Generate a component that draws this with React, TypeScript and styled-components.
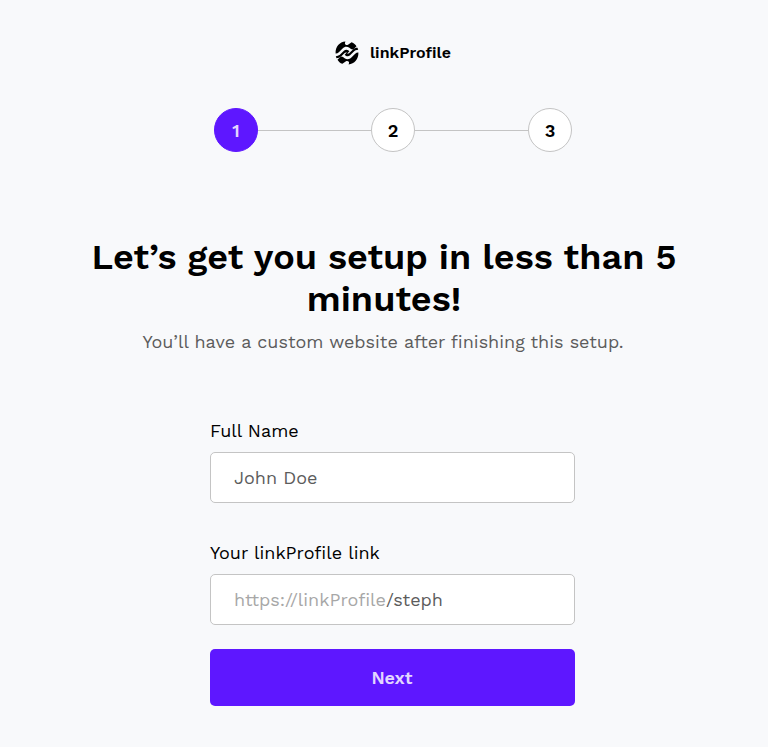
import React from "react";
import styled, { createGlobalStyle } from "styled-components";

const Global = createGlobalStyle`
  * { box-sizing: border-box; }
  body { margin: 0; background: #f8f9fb; font-family: "Work Sans", Inter, "Noto Sans", sans-serif; color: #000; }
`;
const Page = styled.main`
  min-height: 747px;
  display: flex;
  flex-direction: column;
  padding: 40px 0 41px;
`;
const Brand = styled.header`
  display: flex;
  align-items: flex-end;
  justify-content: center;
  gap: 11px;
  height: 25px;
  padding-left: 18px;
`;
const BrandName = styled.span`
  font-size: 16px;
  font-weight: 600;
  line-height: 25px;
`;
const Steps = styled.ol`
  list-style: none;
  display: flex;
  align-items: center;
  width: 358px;
  margin: 43px 0 0 214px;
  padding: 0;
`;
const Step = styled.li<{ $active?: boolean }>`
  flex: none;
  display: flex;
  align-items: center;
  justify-content: center;
  width: 44px;
  height: 44px;
  padding-top: 1px;
  border-radius: 50%;
  border: 1px solid ${(p) => (p.$active ? "#5e17ff" : "#c4c4c4")};
  background: ${(p) => (p.$active ? "#5e17ff" : "#fff")};
  color: ${(p) => (p.$active ? "#e2d6ff" : "#000")};
  font-size: 18px;
  font-weight: 600;
`;
const Connector = styled.li`
  flex: 1;
  height: 1px;
  background: #c4c4c4;
`;
const Title = styled.h1`
  margin: 84px 0 0;
  text-align: center;
  font-size: 36px;
  font-weight: 600;
  line-height: 42px;
`;
const Subtitle = styled.p`
  margin: 10px 2px 0 0;
  text-align: center;
  font-size: 18px;
  line-height: 24px;
  color: #5c5c5c;
`;
const Form = styled.form`
  width: 365px;
  margin: 66px 0 0 210px;
  display: flex;
  flex-direction: column;
`;
const Field = styled.label`
  display: block;
  margin-bottom: 24px;
  & + & { margin-top: 15px; }
`;
const Label = styled.span`
  display: block;
  margin-bottom: 11px;
  font-size: 18px;
  line-height: 21px;
`;
const InputBox = styled.span`
  display: flex;
  align-items: center;
  height: 51px;
  padding: 0 23px;
  border: 1px solid #c4c4c4;
  border-radius: 5px;
  background: #fff;
  font-size: 18px;
  color: #5c5c5c;
`;
const Prefix = styled.span`
  color: #a7a7a7;
`;
const Submit = styled.button`
  height: 57px;
  padding: 0 1px 0 0;
  border: 0;
  border-radius: 5px;
  background: #5e17ff;
  color: #e2d6ff;
  font: inherit;
  font-size: 18px;
  font-weight: 600;
`;

const CAP =
  "M.6 12.4C.3 5.8 4.6.8 10.4.5L9.9 2.2C9.9 3.7 11.6 4.6 13 3.7L16.6 1.2C18.9 2 20.4 3.4 21.5 5.3L19 7.8C18 8.7 17 8.7 16 8L14.4 6.8C12.2 5.2 9.5 5.5 7.6 7.4L3.8 11.2C2.8 12.1 1.8 12.5.6 12.4Z";
const HOOK =
  "M.8 15.2C2.6 15.2 4.2 14.5 5.6 13.1L8.9 9.8C10.2 8.5 11.8 8.3 13.2 9.3L14.4 10.2L12.4 12.2L11.8 11.8C11.1 11.3 10.3 11.4 9.7 12L6.3 15.3C4.9 16.6 3.4 17.2 1.5 17.2Z";

// Two identical interlocking halves, the second turned by 180 degrees.
function Logo() {
  return (
    <svg width="24" height="24" viewBox="0 0 24 24" aria-hidden="true">
      <path d={CAP} />
      <path d={HOOK} />
      <g transform="rotate(180 12 12)">
        <path d={CAP} />
        <path d={HOOK} />
      </g>
    </svg>
  );
}

export default function App() {
  return (
    <Page>
      <Global />
      <Brand>
        <Logo />
        <BrandName>linkProfile</BrandName>
      </Brand>
      <Steps>
        <Step $active>1</Step>
        <Connector />
        <Step>2</Step>
        <Connector />
        <Step>3</Step>
      </Steps>
      <Title>
        Let’s get you setup in less than 5<br />
        minutes!
      </Title>
      <Subtitle>You’ll have a custom website after finishing this setup.</Subtitle>
      <Form>
        <Field>
          <Label>Full Name</Label>
          <InputBox>John Doe</InputBox>
        </Field>
        <Field>
          <Label>Your linkProfile link</Label>
          <InputBox>
            <Prefix>https://linkProfile</Prefix>/steph
          </InputBox>
        </Field>
        <Submit type="button">Next</Submit>
      </Form>
    </Page>
  );
}
